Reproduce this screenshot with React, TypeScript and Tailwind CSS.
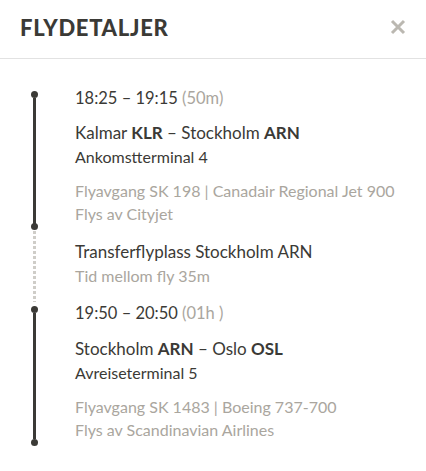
import React from "react";

type Leg = {
  time: string;
  duration: string;
  from: string;
  fromCode: string;
  to: string;
  toCode: string;
  terminal: string;
  flight: string;
  operator: string;
};

const legs: Leg[] = [
  {
    time: "18:25 – 19:15",
    duration: "(50m)",
    from: "Kalmar",
    fromCode: "KLR",
    to: "Stockholm",
    toCode: "ARN",
    terminal: "Ankomstterminal 4",
    flight: "Flyavgang SK 198 | Canadair Regional Jet 900",
    operator: "Flys av Cityjet",
  },
  {
    time: "19:50 – 20:50",
    duration: "(01h )",
    from: "Stockholm",
    fromCode: "ARN",
    to: "Oslo",
    toCode: "OSL",
    terminal: "Avreiseterminal 5",
    flight: "Flyavgang SK 1483 | Boeing 737-700",
    operator: "Flys av Scandinavian Airlines",
  },
];

const Dot = () => <span className="block shrink-0 w-[7px] h-[7px] rounded-full bg-[#3b3a36]" />;

// one leg of the trip, solid rail with dots at both ends
const LegBlock: React.FC<{ leg: Leg; last?: boolean }> = ({ leg, last }) => (
  <div className="flex">
    <div className="w-[75px] flex flex-col items-center pl-[31px] pr-[37px] pt-[4px]">
      <Dot />
      <div className="w-[3px] flex-1 bg-[#3b3a36]" />
      {last && <Dot />}
    </div>
    <div className={last ? "flex-1 pb-[5px]" : "flex-1"}>
      <div className="text-[16.5px] leading-[22px] text-[#3b3a36]">
        {leg.time} <span className="text-[#aaa69e]">{leg.duration}</span>
      </div>
      <div className={last ? "mt-[14px] text-[17px] leading-[22px] text-[#3b3a36]" : "mt-[13px] text-[17px] leading-[22px] text-[#3b3a36]"}>
        {leg.from} <span className="font-bold">{leg.fromCode}</span> – {leg.to}{" "}
        <span className="font-bold">{leg.toCode}</span>
      </div>
      <div className="mt-[2px] text-[16px] leading-[22px] text-[#3b3a36]">{leg.terminal}</div>
      <div className="mt-[12px] text-[16px] leading-[22px] text-[#aaa69e]">{leg.flight}</div>
      <div className="mt-[1px] text-[16px] leading-[22px] text-[#aaa69e]">{leg.operator}</div>
    </div>
  </div>
);

const App: React.FC = () => {
  return (
    <div className="w-[426px] h-[471px] bg-white" style={{ fontFamily: "Lato, 'Open Sans', sans-serif" }}>
      <div className="flex items-center justify-between h-[59px] pl-[20px] pr-[20px] border-b border-[#e2e2e2]">
        <h1 className="text-[22px] font-black tracking-[0.7px] text-[#3b3a36] mt-[-3px]">FLYDETALJER</h1>
        <svg width="16" height="16" viewBox="0 0 16 16" className="mt-[-4px]">
          <path d="M2 2 L14 14 M14 2 L2 14" stroke="#bbb8b1" strokeWidth="3" />
        </svg>
      </div>

      <div className="pt-[28px]">
        <LegBlock leg={legs[0]} />

        {/* transfer between flights, dotted rail */}
        <div className="flex">
          <div className="w-[75px] flex flex-col items-center pl-[31px] pr-[37px] mt-[-2px]">
            <Dot />
            <div className="w-[3px] flex-1 mt-[1px] bg-[repeating-linear-gradient(to_bottom,#cfcdc8_0px,#cfcdc8_3px,transparent_3px,transparent_5px)]" />
          </div>
          <div className="flex-1 pt-[16px] pb-[15px]">
            <div className="text-[17px] leading-[22px] text-[#3b3a36]">Transferflyplass Stockholm ARN</div>
            <div className="mt-[2px] text-[16px] leading-[22px] text-[#aaa69e]">Tid mellom fly 35m</div>
          </div>
        </div>

        <LegBlock leg={legs[1]} last />
      </div>
    </div>
  );
};

export default App;
